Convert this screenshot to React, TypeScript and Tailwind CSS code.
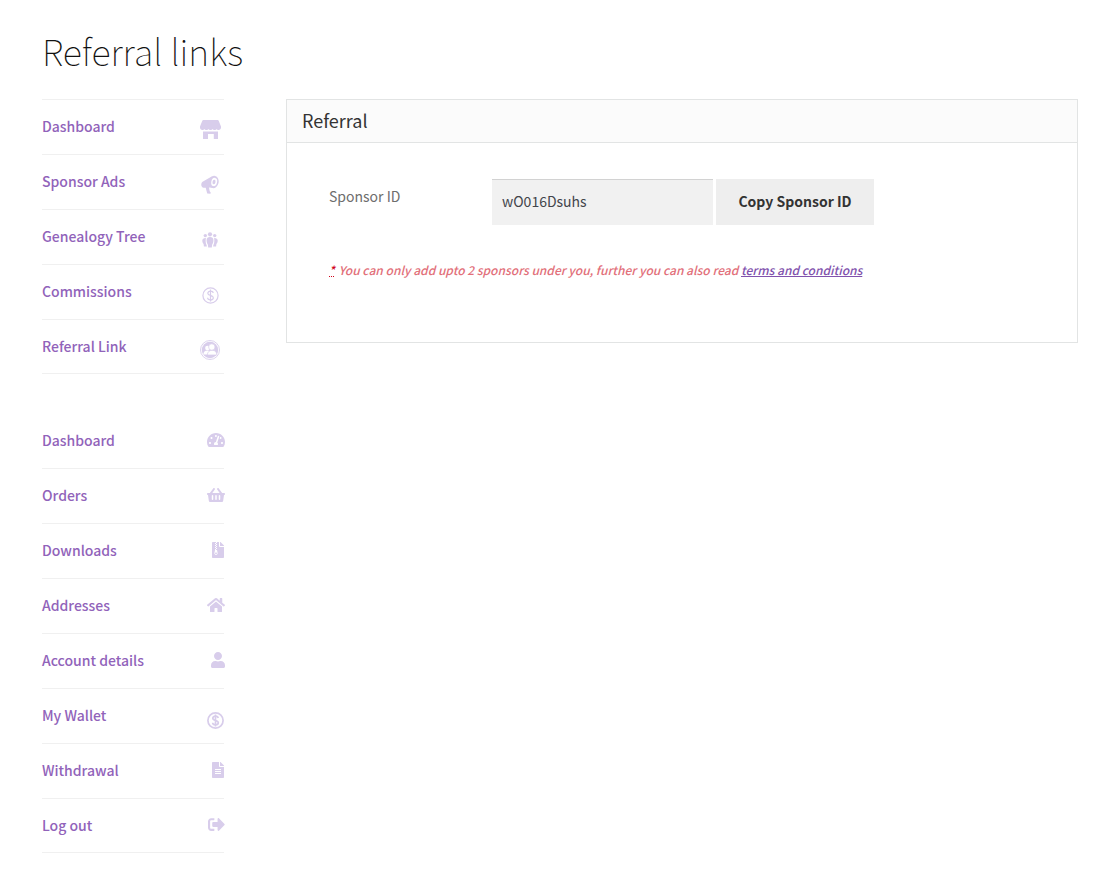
import React, { useState } from "react";
import {
  FaTachometerAlt,
  FaShoppingBasket,
  FaFileArchive,
  FaHome,
  FaUser,
  FaFileAlt,
  FaSignOutAlt,
} from "react-icons/fa";

const styles = {
  navItem:
    "flex h-[55px] items-center justify-between border-b border-[#f0f0f0] pb-0.5 last:h-[54px]",
  navLink: "font-medium text-[#9163ba] hover:text-[#5f3a85]",
};

function StoreIcon() {
  return (
    <svg width="21" height="20" viewBox="0 0 21 20" fill="currentColor">
      <path d="M3.4 0h14.2c.5 0 .9.2 1.1.7L21 6.6v1c0 1.400-1 2.500-2.300 2.500-1 0-1.700-.5-2.100-1.200-.4.7-1.100 1.200-2 1.200s-1.700-.5-2.100-1.200c-.4.7-1.100 1.200-2 1.200s-1.600-.5-2-1.200c-.4.7-1.200 1.200-2.100 1.200s-1.600-.5-2-1.200c-.4.7-1.100 1.200-2.100 1.200C1 10.100 0 9 0 7.600v-1L2.300.7C2.500.2 2.900 0 3.400 0z" />
      <path d="M3 11.600h15V19h-4.200v-5H8v5H3z" />
    </svg>
  );
}

function MegaphoneIcon() {
  return (
    <svg width="18" height="20" viewBox="0 0 18 20" fill="currentColor">
      <path d="M11.500 1 2 6.500C.4 7.500-.1 9.200.5 10.900c.6 1.500 1.800 2.100 3.400 1.900h.8L6.200 18.500l3.300.2.2-1.300-1-1.200-.7-3.600 5 .4z" />
      <ellipse cx="12.900" cy="7" rx="4.700" ry="6.200" transform="rotate(12 12.900 7)" />
      <ellipse cx="13.200" cy="7" rx="2.900" ry="4.200" transform="rotate(12 13.200 7)" fill="#fff" />
      <ellipse cx="13" cy="7" rx="1.500" ry="2.200" transform="rotate(12 13 7)" />
    </svg>
  );
}

function PeopleIcon() {
  return (
    <svg width="16" height="16" viewBox="0 0 16 16" fill="currentColor">
      <circle cx="8" cy="2.300" r="2.100" />
      <circle cx="3.300" cy="3.600" r="1.700" />
      <circle cx="12.700" cy="3.600" r="1.700" />
      <path d="M8 5.100c2.200 0 3.400 1.100 3.400 3 0 2-.5 3.700-1.300 4.700L9.800 15.600H6.200L5.900 12.800C5.100 11.800 4.600 10.100 4.600 8.100c0-1.900 1.200-3 3.400-3z" />
      <path d="M3.900 6C1.700 5.900.3 6.900.3 8.600c0 1.500.4 2.700 1.300 3.500l.3 2.500h3l-.3-1.500C3.700 11.500 3.400 8.500 3.900 6zM12.100 6c2.200-.1 3.600.9 3.600 2.600 0 1.500-.4 2.700-1.300 3.500l-.3 2.500h-3l.3-1.500c.9-1.600 1.200-4.600.7-7.100z" />
    </svg>
  );
}

function DollarIcon({ bold = false }: { bold?: boolean }) {
  return (
    <svg
      width="17"
      height="17"
      viewBox="0 0 17 17"
      fill="none"
      stroke="currentColor"
      strokeWidth={bold ? 1.7 : 1.2}
    >
      <circle cx="8.500" cy="8.500" r="7.600" />
      <path d="M11.200 6C11 4.700 10 4.100 8.500 4.100S5.800 4.900 5.800 6.200c0 3 5.500 1.500 5.500 4.500 0 1.300-1.100 2.200-2.800 2.200s-2.800-.8-2.900-2.100M8.500 2.500v12" />
    </svg>
  );
}

function ReferralIcon() {
  return (
    <svg width="20" height="20" viewBox="0 0 20 20" fill="currentColor">
      <circle cx="10" cy="10" r="9.500" fill="none" stroke="currentColor" strokeWidth="0.900" />
      <circle cx="10" cy="10" r="8.200" />
      <g fill="#fff">
        <circle cx="7.400" cy="8" r="2.300" />
        <path d="M3.400 14.600c0-2.800 1.400-4.200 4-4.200 2.500 0 3.800 1.400 3.800 4.200z" />
      </g>
      <g fill="#fff" stroke="currentColor" strokeWidth="0.700">
        <path d="M7.300 15c.2-3.100 2-4.700 4.900-4.700 2.800 0 4.500 1.600 4.700 4.700z" />
        <circle cx="11.800" cy="7" r="3.200" />
      </g>
    </svg>
  );
}

const sponsorLinks = [
  { name: "Dashboard", icon: <StoreIcon /> },
  { name: "Sponsor Ads", icon: <MegaphoneIcon /> },
  { name: "Genealogy Tree", icon: <PeopleIcon /> },
  { name: "Commissions", icon: <DollarIcon /> },
  { name: "Referral Link", icon: <ReferralIcon /> },
];

const accountLinks = [
  { name: "Dashboard", icon: <FaTachometerAlt size={18} /> },
  { name: "Orders", icon: <FaShoppingBasket size={18} /> },
  { name: "Downloads", icon: <FaFileArchive size={16} />, narrow: true },
  { name: "Addresses", icon: <FaHome size={18} /> },
  { name: "Account details", icon: <FaUser size={16} />, narrow: true },
  { name: "My Wallet", icon: <DollarIcon bold />, low: true },
  { name: "Withdrawal", icon: <FaFileAlt size={16} />, narrow: true },
  { name: "Log out", icon: <FaSignOutAlt size={17} /> },
];

function Sidebar() {
  return (
    <nav className="w-[182px] shrink-0">
      {/* Sponsor menu */}
      <ul className="border-t border-[#f0f0f0]">
        {sponsorLinks.map((item) => (
          <li key={item.name} className={styles.navItem}>
            <a href="#" className={styles.navLink}>
              {item.name}
            </a>
            <span className="flex w-7 justify-center pt-2 text-[#d8cdeb]">
              {item.icon}
            </span>
          </li>
        ))}
      </ul>
      {/* Account menu */}
      <ul className="mt-10">
        {accountLinks.map((item) => (
          <li key={item.name} className={styles.navItem}>
            <a href="#" className={styles.navLink}>
              {item.name}
            </a>
            <span
              className={
                item.low
                  ? "pt-[10px] text-[#d8cdeb]"
                  : item.narrow
                    ? "-mr-0.5 text-[#d8cdeb]"
                    : "-mr-px text-[#d8cdeb]"
              }
            >
              {item.icon}
            </span>
          </li>
        ))}
      </ul>
    </nav>
  );
}

function App() {
  const [sponsorId, setSponsorId] = useState("wO016Dsuhs");

  return (
    <div className="min-h-screen bg-white px-[42px] pt-6 pb-7 font-['Noto_Sans_CJK_SC','Noto_Sans',sans-serif] text-[14px] leading-6 text-[#6d6d6d]">
      <h1 className="text-[36px] font-thin leading-[52px] text-[#111111]">
        Referral links
      </h1>
      <div className="mt-[23px] flex items-start gap-[62px]">
        <Sidebar />
        <main className="min-w-0 flex-1 border border-[#e2e4e4] pb-[60px]">
          <h2 className="border-b border-[#e2e4e4] bg-[#fbfbfb] px-[15px] pt-2 pb-[10px] text-[18px] leading-6 text-[#333333]">
            Referral
          </h2>
          <div className="px-[42px] pt-9">
            <div className="flex items-start">
              <label htmlFor="sponsor-id" className="w-[163px] pt-[5px]">
                Sponsor ID
              </label>
              <input
                id="sponsor-id"
                type="text"
                value={sponsorId}
                onChange={(e) => setSponsorId(e.target.value)}
                className="h-[46px] w-[221px] border-t border-[#d2d2d2] bg-[#f1f1f1] px-[10px] pb-1 text-[#43454b] outline-none"
              />
              <button
                type="button"
                onClick={() => navigator.clipboard?.writeText(sponsorId)}
                className="ml-[3px] h-[46px] w-[158px] cursor-pointer bg-[#eeeeee] pb-0.5 font-bold text-[#333333] hover:bg-[#d5d5d5]"
              >
                Copy Sponsor ID
              </button>
            </div>
            <p className="mt-[33px] text-[12px] font-medium italic text-[#e2707a]">
              <abbr title="required" className="mr-1 text-[#d0021b] underline decoration-dotted">
                *
              </abbr>
              You can only add upto 2 sponsors under you, further you can also read{" "}
              <a href="#" className="text-[#8152ad] underline">
                terms and conditions
              </a>
            </p>
          </div>
        </main>
      </div>
    </div>
  );
}

export default App;
